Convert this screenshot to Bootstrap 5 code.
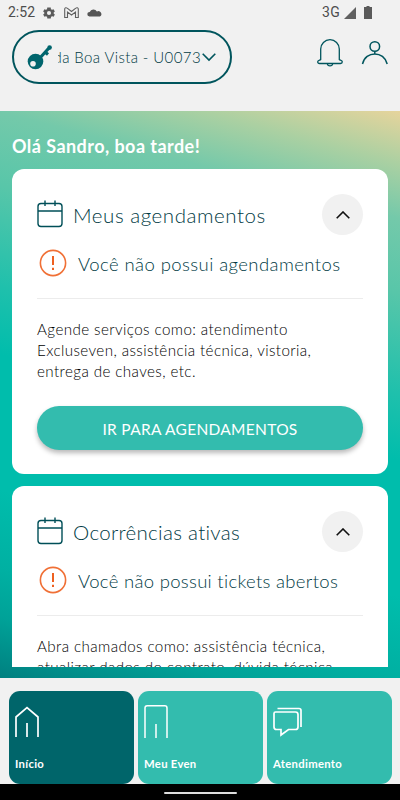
<!DOCTYPE html>
<html lang="pt-BR">
<head>
<meta charset="utf-8">
<meta name="viewport" content="width=device-width, initial-scale=1">
<title>Início</title>
<link href="https://cdn.jsdelivr.net/npm/bootstrap@5.3.0/dist/css/bootstrap.min.css" rel="stylesheet">
<style>
  body { width: 400px; height: 800px; background: #f1f1f1; font-family: Lato, "Open Sans", sans-serif; font-weight: 300; color: #000; }
  svg { display: block; flex: none; overflow: visible; }
  .ink { color: #003a44; }
  .status { height: 25px; padding: 0 28px 0 8px; color: #4d4d4d; font-family: Roboto, sans-serif; font-weight: 400; font-size: 14px; }
  .status span { line-height: 25px; }
  .top { height: 86px; padding: 5px 12px 0; }
  .unit { width: 220px; height: 54px; border: 2px solid #00555d; border-radius: 27px; background: none; padding: 0 13px; }
  .unit-name { width: 143px; height: 24px; margin-left: 6px; font-size: 15px; line-height: 25px; letter-spacing: .4px; font-weight: 300; }
  .hero { height: 567px; padding: 0 12px; background: linear-gradient(195deg, #e6d49c 0%, #aad0a2 8%, #74c9aa 16%, #58c6a9 27%, #1fc0ac 42%, #00bdac 52%, #00bdac 72%, #00b0a2 84%, #00a298 91%, #008080 100%); }
  .hello { height: 58px; padding-top: 23px; font-size: 18px; line-height: 24px; font-weight: 700; letter-spacing: .45px; }
  .feed { height: 498px; }
  .panel { border-radius: 12px; padding: 25px 25px 0; height: 305px; margin-bottom: 12px; background: #fff; }
  .panel-title { font-size: 20.5px; line-height: 28px; margin: 7px 0 0 10px; letter-spacing: .55px; font-weight: 300; }
  .toggle { width: 41px; height: 41px; background: #f1f1f1; }
  .notice { height: 40px; margin-top: 8px; padding-left: 2px; font-size: 18.5px; }
  .notice span { margin-left: 11px; padding-top: 4px; letter-spacing: .42px; white-space: nowrap; }
  .tickets .panel-title, .tickets .notice span { letter-spacing: .31px; }
  .rule { height: 1px; background: #ececec; margin: 15px 0 20px; }
  .copy { font-size: 15.2px; line-height: 21.2px; margin: 0; letter-spacing: .4px; white-space: nowrap; }
  .cta { height: 44px; margin-top: 23px; background: #33bcae; border-radius: 22px; color: #fff; font-size: 15.5px; letter-spacing: .3px; padding: 5px 0 0; box-shadow: 0 3px 5px rgba(0,0,0,.28); border: 0; }
  .tabs { height: 106px; padding: 13px 8px 0 9px; gap: 4px; }
  .tab { flex: 1 1 0; height: 93px; border-radius: 11px; background: #33bcae; color: #fff; padding: 13px 6px 0; font-size: 11.3px; font-weight: 700; letter-spacing: .3px; text-decoration: none; }
  .tab.current { background: #00656a; }
  .tab span { line-height: 14px; margin-top: 19px; }
  .system { height: 16px; background: #000; padding-top: 8px; }
  .system div { width: 73px; height: 2px; background: #ddd; }
</style>
</head>
<body class="overflow-hidden d-flex flex-column">
<svg width="0" height="0" class="d-none">
  <symbol id="calendar" viewBox="0 0 26 28"><g fill="none" stroke="#004f58" stroke-width="1.4"><rect x="1" y="3.5" width="24" height="23" rx="3"/><path d="M1 11H25M8 .5V6M18 .5V6"/></g></symbol>
  <symbol id="alert" viewBox="0 0 28 28"><circle cx="14" cy="14" r="12.6" fill="none" stroke="#f07036" stroke-width="1.6"/><path d="M14 7V16M14 18.8V21" stroke="#ee6020" stroke-width="2"/></symbol>
  <symbol id="up" viewBox="0 0 14 8"><path d="M.7 7.3 7 1l6.3 6.3" fill="none" stroke="#111" stroke-width="1.6"/></symbol>
</svg>
<div class="status d-flex justify-content-between">
  <div class="d-flex align-items-center">
    <span>2:52</span>
    <svg style="margin-left:7px" width="14" height="14" viewBox="0 0 24 24" fill="#5b5b5b"><path d="M20 13V11l2-1.6-2.2-3.8-2.5 1-2-1.2L15 2.5H9L8.6 5.4l-2 1.2-2.5-1L2 9.4 4 11v2l-2 1.6 2.2 3.8 2.5-1 2 1.2.4 2.9h6l.4-2.9 2-1.2 2.5 1L22 14.6zM12 15.5a3.5 3.5 0 1 1 0-7 3.5 3.5 0 0 1 0 7z"/></svg>
    <svg class="ms-2" width="15" height="12" viewBox="0 0 15 12" fill="none" stroke="#606060" stroke-width="1.1"><path d="M.7 2v8.500h2.800V5l4 3 4-3v5.500h2.800V2c0-1.300-1.500-1.700-2.500-.8L7.500 4.500 3.200 1.200C2.200.3.7.7.7 2z"/></svg>
    <svg class="ms-2" width="14" height="9" viewBox="0 0 14 9" fill="#555"><path d="M2.500 8.500a2.300 2.300 0 0 1 .2-4.600 4 4 0 0 1 7.200-.4 2.600 2.600 0 0 1 3 5z"/></svg>
  </div>
  <div class="d-flex align-items-center">
    <span style="letter-spacing:.3px">3G</span>
    <svg class="ms-1" width="12" height="12" viewBox="0 0 12 12"><path d="M12 0v12H0z" fill="#606060"/></svg>
    <svg style="margin-left:8px" width="8" height="13" viewBox="0 0 8 13"><path d="M2.500 0h3v1H8v12H0V1h2.500z" fill="#5a5a5a"/></svg>
  </div>
</div>
<header class="top d-flex ink">
  <button class="unit d-flex align-items-center ink">
    <svg width="25" height="25" viewBox="0 0 25 25"><path d="M12 14 21.500 3.500M18 7l3 2.500" stroke="#00656d" stroke-width="3.200" fill="none"/><circle cx="22.600" cy="2.600" r="2.300" fill="#00656d"/><circle cx="8.500" cy="16.500" r="7.800" fill="#00656d"/><circle cx="6" cy="18.700" r="2.800" fill="#f1f1f1"/></svg>
    <div class="unit-name d-flex justify-content-end overflow-hidden text-nowrap"><span>da Boa Vista - U0073</span></div>
    <svg style="margin-left:1px" width="14" height="8" viewBox="0 0 14 8"><path d="M.7.7 7 7 13.300.7" fill="none" stroke="#00555d" stroke-width="1.600"/></svg>
  </button>
  <svg style="margin:9px 0 0 85px" width="26" height="28" viewBox="0 0 26 28" fill="none" stroke="#00555d" stroke-width="1.300"><path d="M3.700 20.500V10a9.300 9.300 0 0 1 18.600 0v10.500c.6.8 3 .2 3 2.300 0 1-.7 1.700-1.800 1.700h-21C1.400 24.500.7 23.800.7 22.800c0-2.100 2.400-1.500 3-2.300zM10.200 24.500c.5 3.200 5.100 3.200 5.600 0"/></svg>
  <svg style="margin:11px 0 0 19px" width="26" height="24" viewBox="0 0 26 24" fill="none" stroke="#00555d" stroke-width="1.500"><circle cx="12.800" cy="5.500" r="4.800"/><path d="M.5 23C3.500 9.500 22 9.500 25.200 23M12.800 10.500V13"/></svg>
</header>
<main class="hero">
  <div class="hello text-white">Olá Sandro, boa tarde!</div>
  <div class="feed overflow-hidden">
    <section class="panel">
      <div class="d-flex">
        <svg style="margin-top:6px" width="26" height="28"><use href="#calendar"/></svg>
        <h2 class="panel-title ink">Meus agendamentos</h2>
        <div class="toggle rounded-circle d-flex align-items-center justify-content-center ms-auto"><svg width="14" height="8"><use href="#up"/></svg></div>
      </div>
      <div class="notice d-flex align-items-center ink"><svg width="28" height="28"><use href="#alert"/></svg><span>Você não possui agendamentos</span></div>
      <div class="rule"></div>
      <p class="copy">Agende serviços como: atendimento<br>Excluseven, assistência técnica, vistoria,<br>entrega de chaves, etc.</p>
      <button class="cta btn w-100">IR PARA AGENDAMENTOS</button>
    </section>
    <section class="panel tickets">
      <div class="d-flex">
        <svg style="margin-top:6px" width="26" height="28"><use href="#calendar"/></svg>
        <h2 class="panel-title ink">Ocorrências ativas</h2>
        <div class="toggle rounded-circle d-flex align-items-center justify-content-center ms-auto"><svg width="14" height="8"><use href="#up"/></svg></div>
      </div>
      <div class="notice d-flex align-items-center ink"><svg width="28" height="28"><use href="#alert"/></svg><span>Você não possui tickets abertos</span></div>
      <div class="rule"></div>
      <p class="copy">Abra chamados como: assistência técnica,<br>atualizar dados do contrato, dúvida técnica</p>
    </section>
  </div>
</main>
<nav class="tabs d-flex">
  <a class="tab current d-flex flex-column">
    <svg width="24" height="34" viewBox="0 0 24 34" fill="none" stroke="#fff" stroke-width="1.700"><path d="M1 33V13L12 3.500 23 13v20M12 19v14"/></svg><span>Início</span></a>
  <a class="tab d-flex flex-column">
    <svg width="24" height="34" viewBox="0 0 24 34" fill="none" stroke="#fff" stroke-width="1.500"><path d="M1 34V4q0-2.200 2.200-2.200h17.600Q23 1.800 23 4v30M12 20v14"/></svg><span>Meu Even</span></a>
  <a class="tab d-flex flex-column">
    <svg width="30" height="34" viewBox="0 0 30 34" fill="none" stroke="#fff" stroke-width="1.700"><path d="M2.500 8h20Q25 8 25 10.500v12.500q0 2.500-2.500 2.500h-7L8 31v-5.500H3.500Q1 25.500 1 23V9.500Q1 8 2.500 8zM4.500 4.500H26q2 0 2 2V23"/></svg><span>Atendimento</span></a>
</nav>
<footer class="system"><div class="mx-auto rounded"></div></footer>
<script src="https://cdn.jsdelivr.net/npm/bootstrap@5.3.0/dist/js/bootstrap.bundle.min.js"></script>
</body>
</html>
